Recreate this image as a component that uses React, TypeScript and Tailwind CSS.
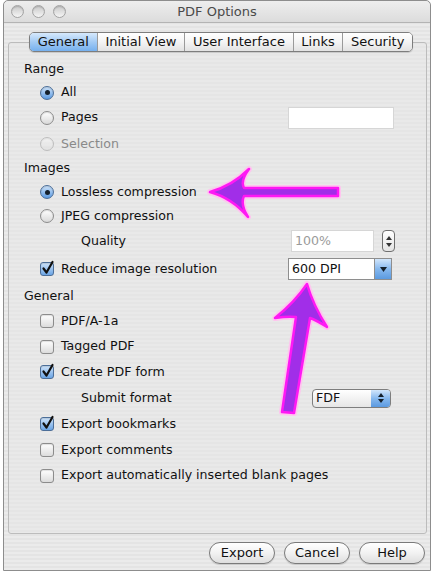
import type { ReactNode } from 'react';

const stripes =
  'bg-[repeating-linear-gradient(0deg,#ebebeb_0px,#ebebeb_2px,#e4e4e4_2px,#e4e4e4_4px)]';

function Radio({ checked, disabled }: { checked?: boolean; disabled?: boolean }) {
  return (
    <span
      className={
        'w-[14px] h-[14px] shrink-0 rounded-full border flex items-center justify-center shadow-[inset_0_1px_1px_rgba(0,0,0,0.12)] ' +
        (checked
          ? 'border-[#4c6e98] bg-linear-to-b from-[#cfe4fa] to-[#5b9ae0]'
          : 'border-[#8c8c8c] bg-linear-to-b from-[#ffffff] to-[#d9d9d9]') +
        (disabled ? ' opacity-45' : '')
      }
    >
      {checked && <span className="w-[5px] h-[5px] rounded-full bg-[#15202c]" />}
    </span>
  );
}

function Check({ checked }: { checked?: boolean }) {
  return (
    <span
      className={
        'relative block w-[14px] h-[14px] shrink-0 rounded-[3px] border shadow-[inset_0_1px_1px_rgba(0,0,0,0.12)] ' +
        (checked
          ? 'border-[#4c6e98] bg-linear-to-b from-[#cfe4fa] to-[#6aa4e4]'
          : 'border-[#8c8c8c] bg-linear-to-b from-[#ffffff] to-[#dcdcdc]')
      }
    >
      {checked && (
        <svg className="absolute left-[0px] -top-[3px]" width="14" height="15" viewBox="0 0 14 15">
          <path d="M2.5 8.5 L5.5 12.5 L11.5 2" fill="none" stroke="#111" strokeWidth="2.2" strokeLinecap="round" strokeLinejoin="round" />
        </svg>
      )}
    </span>
  );
}

function Header({ label, h }: { label: string; h: string }) {
  return (
    <div className={'flex items-center ' + h}>
      <span>{label}</span>
      <span className="flex-1 h-px bg-[#c6c6c6] ml-[5px] border-b border-white/60" />
    </div>
  );
}

function Row({ h, children }: { h: string; children: ReactNode }) {
  return <div className={'flex items-center ' + h}>{children}</div>;
}

function Tabs() {
  const tabs = [
    ['General', 'w-[67px]'],
    ['Initial View', 'w-[88px]'],
    ['User Interface', 'w-[109px]'],
    ['Links', 'w-[50px]'],
    ['Security', 'w-[70px]'],
  ];
  return (
    <div className="relative z-10 ml-[25px] -mb-[10px] flex h-[20px] w-[384px] rounded-[5px] border border-[#7d7d7d] overflow-hidden shadow-[0_1px_1px_rgba(0,0,0,0.15)]">
      {tabs.map(([t, w], i) => (
        <div
          key={t}
          className={
            'flex items-center justify-center text-[13px] text-[#111] ' +
            w +
            (i > 0 ? ' border-l border-[#9a9a9a]' : '') +
            (i === 0
              ? ' bg-linear-to-b from-[#d6e9fc] via-[#a2caf4] to-[#75b0ee]'
              : ' bg-linear-to-b from-[#ffffff] via-[#f4f4f4] to-[#e2e2e2]')
          }
        >
          {t}
        </div>
      ))}
    </div>
  );
}

function Button({ label }: { label: string }) {
  return (
    <div className="w-[66px] h-[22px] rounded-full border border-[#7a7a7a] bg-linear-to-b from-[#ffffff] via-[#f2f2f2] to-[#dedede] flex items-center justify-center text-[13px] text-[#111] shadow-[0_1px_1px_rgba(0,0,0,0.15)]">
      {label}
    </div>
  );
}

function Arrows() {
  const a1 =
    'M210,192 Q232,186 249,169 Q240,181 244,188 L338,188 L338,196 L244,196 Q240,204 248,217 Q232,198 210,192 Z';
  const a2 =
    'M307,284 Q313,305 327,327 Q316,320 310,318 L294,413 L282,412 L296,317 Q288,316 275,318 Q295,302 307,284 Z';
  return (
    <svg className="pointer-events-none absolute inset-0" width="434" height="572" viewBox="0 0 434 572">
      <g fill="none" stroke="#ffc4ef" strokeWidth="6" strokeLinejoin="round">
        <path d={a1} />
        <path d={a2} />
      </g>
      <g fill="#a12ee8" stroke="#ff18f4" strokeWidth="2.5" strokeLinejoin="round">
        <path d={a1} />
        <path d={a2} />
      </g>
    </svg>
  );
}

export default function App() {
  return (
    <div className="relative w-[434px] h-[572px] bg-white overflow-hidden font-['Lucida_Grande','DejaVu_Sans',sans-serif] text-[12.6px] text-[#111]">
      <div className={'ml-[3px] w-[428px] h-[571px] rounded-t-[5px] border border-[#8d8d8d] flex flex-col ' + stripes}>
        {/* title bar */}
        <div className="relative h-[22px] shrink-0 rounded-t-[5px] bg-linear-to-b from-[#eeeeee] to-[#dcdcdc] border-b border-[#b4b4b4] flex items-center justify-center">
          <div className="absolute left-[7px] top-[4px] flex gap-[8px]">
            {[0, 1, 2].map((i) => (
              <span
                key={i}
                className="w-[13px] h-[13px] rounded-full border border-[#a3a3a3] bg-linear-to-b from-[#c9c9c9] to-[#f5f5f5] shadow-[inset_0_1px_1px_rgba(0,0,0,0.15)]"
              />
            ))}
          </div>
          <span className="text-[13px] text-[#4a4a4a]">PDF Options</span>
        </div>

        <div className="mt-[9px]">
          <Tabs />
        </div>

        {/* panel */}
        <div className="ml-[4px] w-[419px] h-[492px] border border-[#bcbcbc] rounded-[3px] bg-[#e6e6e6]/40 pt-[14px] pl-[15px] pr-[17px]">
          <Header label="Range" h="h-[24px]" />
          <Row h="h-[23px]">
            <span className="ml-[16px]"><Radio checked /></span>
            <span className="ml-[7px]">All</span>
          </Row>
          <Row h="h-[27px]">
            <span className="ml-[16px]"><Radio /></span>
            <span className="ml-[7px]">Pages</span>
            <span className="ml-auto mr-[15px] w-[106px] h-[22px] bg-white border border-[#d6d6d6]" />
          </Row>
          <Row h="h-[26px]">
            <span className="ml-[16px]"><Radio disabled /></span>
            <span className="ml-[7px] text-[#8a8a8a]">Selection</span>
          </Row>
          <Header label="Images" h="h-[23px]" />
          <Row h="h-[24px]">
            <span className="ml-[16px]"><Radio checked /></span>
            <span className="ml-[7px]">Lossless compression</span>
          </Row>
          <Row h="h-[24px]">
            <span className="ml-[16px]"><Radio /></span>
            <span className="ml-[7px]">JPEG compression</span>
          </Row>
          <Row h="h-[26px]">
            <span className="ml-[57px]">Quality</span>
            <span className="ml-auto w-[83px] h-[22px] bg-white border border-[#d6d6d6] flex items-center pl-[3px] text-[#9a9a9a]">
              100%
            </span>
            <span className="ml-[8px] mr-[14px] w-[13px] h-[22px] rounded-[4px] border border-[#6f6f6f] bg-linear-to-b from-[#ffffff] to-[#e4e4e4] flex flex-col items-center justify-center gap-[3px]">
              <svg width="6" height="4" viewBox="0 0 6 4"><path d="M0 4 L3 0 L6 4 Z" fill="#333" /></svg>
              <svg width="6" height="4" viewBox="0 0 6 4"><path d="M0 0 L3 4 L6 0 Z" fill="#333" /></svg>
            </span>
          </Row>
          <Row h="h-[30px]">
            <span className="ml-[16px]"><Check checked /></span>
            <span className="ml-[7px]">Reduce image resolution</span>
            <span className="ml-auto mr-[17px] w-[104px] h-[22px] bg-white border border-[#8e8e8e] flex items-center">
              <span className="flex-1 pl-[3px] text-[#111]">600 DPI</span>
              <span className="w-[17px] h-full border-l border-[#8e8e8e] bg-linear-to-b from-[#d2e6fb] via-[#86b8ee] to-[#5b9ae0] flex items-center justify-center">
                <svg width="7" height="5" viewBox="0 0 7 5"><path d="M0 0 L3.5 5 L7 0 Z" fill="#14202c" /></svg>
              </span>
            </span>
          </Row>
          <Header label="General" h="h-[24px]" />
          <Row h="h-[26px]">
            <span className="ml-[16px]"><Check /></span>
            <span className="ml-[7px]">PDF/A-1a</span>
          </Row>
          <Row h="h-[25px]">
            <span className="ml-[16px]"><Check /></span>
            <span className="ml-[7px]">Tagged PDF</span>
          </Row>
          <Row h="h-[26px]">
            <span className="ml-[16px]"><Check checked /></span>
            <span className="ml-[7px]">Create PDF form</span>
          </Row>
          <Row h="h-[26px]">
            <span className="ml-[57px]">Submit format</span>
            <span className="ml-auto mr-[18px] w-[79px] h-[19px] rounded-[4px] border border-[#7e7e7e] bg-linear-to-b from-[#ffffff] to-[#e6e6e6] flex items-center overflow-hidden">
              <span className="flex-1 pl-[3px] text-[#111]">FDF</span>
              <span className="w-[19px] h-full bg-linear-to-b from-[#d2e6fb] via-[#86b8ee] to-[#5b9ae0] flex flex-col items-center justify-center gap-[2px]">
                <svg width="6" height="4" viewBox="0 0 6 4"><path d="M0 4 L3 0 L6 4 Z" fill="#14202c" /></svg>
                <svg width="6" height="4" viewBox="0 0 6 4"><path d="M0 0 L3 4 L6 0 Z" fill="#14202c" /></svg>
              </span>
            </span>
          </Row>
          <Row h="h-[26px]">
            <span className="ml-[16px]"><Check checked /></span>
            <span className="ml-[7px]">Export bookmarks</span>
          </Row>
          <Row h="h-[26px]">
            <span className="ml-[16px]"><Check /></span>
            <span className="ml-[7px]">Export comments</span>
          </Row>
          <Row h="h-[25px]">
            <span className="ml-[16px]"><Check /></span>
            <span className="ml-[7px]">Export automatically inserted blank pages</span>
          </Row>
        </div>

        {/* buttons */}
        <div className="mt-[8px] flex justify-end gap-[9px] pr-[5px]">
          <Button label="Export" />
          <Button label="Cancel" />
          <Button label="Help" />
        </div>
      </div>
      <Arrows />
    </div>
  );
}
